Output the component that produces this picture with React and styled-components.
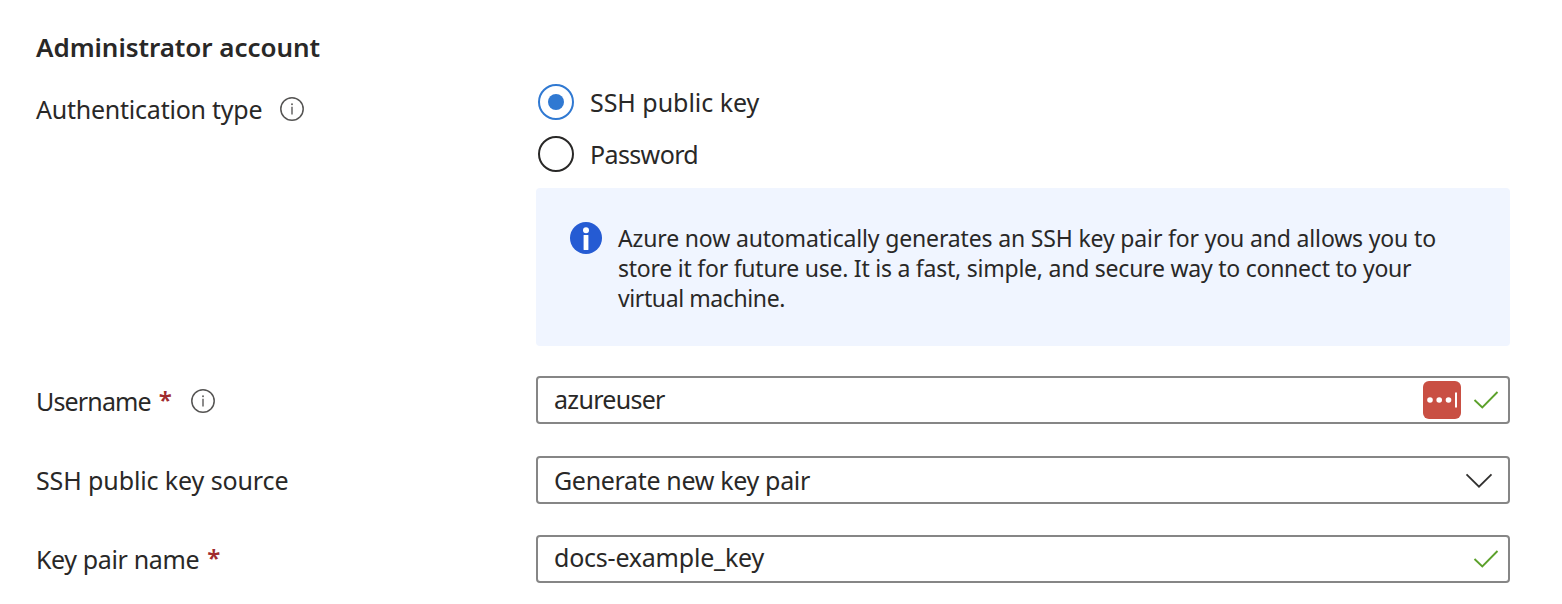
import React from "react";
import styled, { createGlobalStyle } from "styled-components";

const GlobalStyle = createGlobalStyle`
  * { box-sizing: border-box; }
  body {
    margin: 0;
    background: #fff;
    color: #292827;
    font-family: "Noto Sans", "Open Sans", sans-serif;
    font-size: 25px;
  }
  svg { display: block; flex: none; }
`;

const Form = styled.main`
  width: 1562px;
  height: 604px;
  padding: 29px 52px 0 36px;
  overflow: hidden;
`;

const Title = styled.h2`
  margin: 0;
  height: 55px;
  font-size: 26px;
  font-weight: 600;
  line-height: 36px;
  letter-spacing: -0.05px;
`;

const Row = styled.div`
  display: grid;
  grid-template-columns: 500px 974px;
  margin-bottom: ${(p) => p.$gap}px;
`;

const Label = styled.div`
  display: flex;
  align-items: center;
  height: ${(p) => p.$height || 48}px;
  padding-top: ${(p) => p.$drop || 0}px;
  line-height: 36px;
`;

const Text = styled.span`
  letter-spacing: ${(p) => p.$track || 0}px;
  white-space: pre;
`;

const Required = styled.span`
  margin-left: 8px;
  padding-bottom: 2px;
  width: 14px;
  color: #a02b2e;
  font-weight: 600;
  font-size: 24px;
`;

const InfoGlyph = styled.svg`
  margin-left: ${(p) => p.$gap}px;
`;

const RadioGroup = styled.div`
  display: flex;
  flex-direction: column;
  gap: 16px;
  padding-left: 2px;
`;

const Option = styled.label`
  display: flex;
  gap: 16px;
  height: 36px;
  line-height: 37px;
`;

const Radio = styled.span`
  display: grid;
  place-items: center;
  width: 36px;
  height: 36px;
  border: 2px solid ${(p) => (p.$on ? "#3079d2" : "#292827")};
  border-radius: 50%;
  &::after {
    content: "";
    width: 16px;
    height: 16px;
    border-radius: 50%;
    background: ${(p) => (p.$on ? "#3079d2" : "transparent")};
  }
`;

const Notice = styled.div`
  display: flex;
  gap: 16px;
  height: 158px;
  margin: 0 0 0 -2px;
  padding: 34px;
  border-radius: 4px;
  background: #f0f5ff;
`;

const Message = styled.div`
  display: flex;
  flex-direction: column;
  padding-top: 1px;
  font-size: 23px;
  line-height: 30px;
`;

const Field = styled.div`
  display: flex;
  align-items: center;
  height: 48px;
  padding: 0 9px 0 16px;
  border: 2px solid #868686;
  border-radius: 4px;
  background: #fff;
`;

const Value = styled.span`
  flex: 1;
  padding-bottom: ${(p) => p.$lift || 0}px;
  line-height: 36px;
  letter-spacing: ${(p) => p.$track}px;
`;

const PasswordManager = styled.svg`
  margin-right: 12px;
`;

const Info = ({ gap }) => (
  <InfoGlyph $gap={gap} width="26" height="26" viewBox="0 0 26 26" fill="none">
    <circle cx="13" cy="13" r="11.2" stroke="#555453" strokeWidth="1.5" />
    <circle cx="13" cy="8.2" r="1" fill="#666564" />
    <path d="M13 10.8V18.5" stroke="#666564" strokeWidth="1.5" />
  </InfoGlyph>
);

const Check = () => (
  <svg width="26" height="20" viewBox="0 0 26 20" fill="none">
    <path d="M1.5 10L9.3 17.4L24.5 2" stroke="#5ca12b" strokeWidth="1.9" />
  </svg>
);

const Chevron = () => (
  <svg width="38" height="18" viewBox="0 0 38 18" fill="none">
    <path d="M5.5 3.3L18 15.7L30.5 3.3" stroke="#323130" strokeWidth="1.8" />
  </svg>
);

const lines = [
  ["Azure now automatically generates an SSH key pair for you and allows you to", -0.155],
  ["store it for future use. It is a fast, simple, and secure way to connect to your", -0.235],
  ["virtual machine.", -0.4],
];

export default function App() {
  return (
    <Form>
      <GlobalStyle />
      <Title>Administrator account</Title>
      <Row $gap={30}>
        <Label $height={50}>
          <Text $track={-0.23}>Authentication type</Text>
          <Info gap={17} />
        </Label>
        <RadioGroup>
          <Option>
            <Radio $on />
            <Text $track={-0.04}>SSH public key</Text>
          </Option>
          <Option>
            <Radio />
            <Text $track={-0.62}>Password</Text>
          </Option>
          <Notice>
            <svg width="32" height="32" viewBox="0 0 32 32">
              <circle cx="16" cy="16" r="16" fill="#255bd3" />
              <circle cx="16" cy="8.3" r="3" fill="#fff" />
              <rect x="13.6" y="13" width="4.8" height="15" rx="0.6" fill="#fff" />
            </svg>
            <Message>
              {lines.map(([text, track]) => (
                <Text key={text} $track={track}>{text}</Text>
              ))}
            </Message>
          </Notice>
        </RadioGroup>
      </Row>
      <Row $gap={32}>
        <Label $drop={2}>
          <Text $track={-0.85}>Username</Text>
          <Required>*</Required>
          <Info gap={17} />
        </Label>
        <Field>
          <Value $track={-0.7} $lift={2}>azureuser</Value>
          <PasswordManager width="38" height="38" viewBox="0 0 38 38">
            <rect width="38" height="38" rx="6" fill="#c94f43" />
            <circle cx="7" cy="19" r="2.8" fill="#fff" />
            <circle cx="16.2" cy="19" r="2.8" fill="#fff" />
            <circle cx="25.5" cy="19" r="2.8" fill="#fff" />
            <rect x="32" y="11.5" width="2" height="15" fill="#fff" />
          </PasswordManager>
          <Check />
        </Field>
      </Row>
      <Row $gap={31}>
        <Label>
          <Text $track={-0.11}>SSH public key source</Text>
        </Label>
        <Field>
          <Value $track={-0.33}>Generate new key pair</Value>
          <Chevron />
        </Field>
      </Row>
      <Row $gap={0}>
        <Label>
          <Text $track={-0.37}>Key pair name</Text>
          <Required>*</Required>
        </Label>
        <Field>
          <Value $track={-0.22} $lift={4}>docs-example_key</Value>
          <Check />
        </Field>
      </Row>
    </Form>
  );
}
